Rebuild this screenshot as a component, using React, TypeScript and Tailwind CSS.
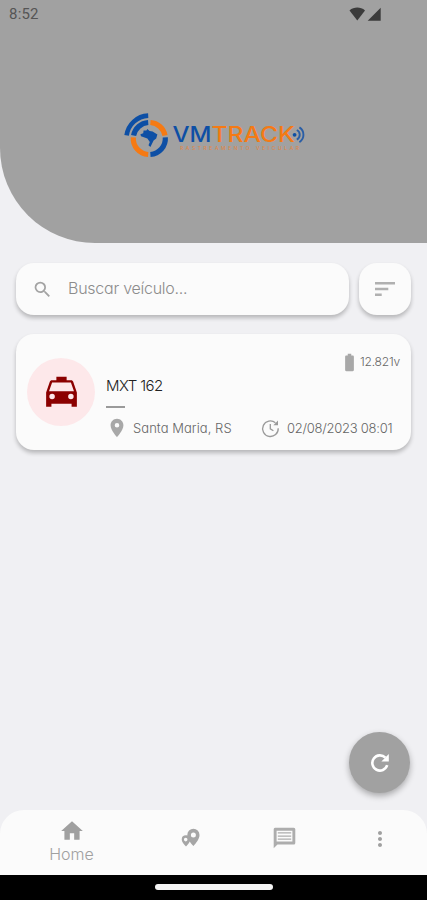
import { MdBatteryFull, MdHome, MdLocationOn, MdMoreVert, MdSearch } from "react-icons/md";

const vehicles = [
  {
    id: 1,
    name: "MXT 162",
    battery: "12.821v",
    city: "Santa Maria, RS",
    date: "02/08/2023 08:01",
  },
];

function StatusBar() {
  return (
    <div className="flex items-center justify-between h-[28px] pl-[9px] pr-[45px]">
      <span className="font-['Roboto',sans-serif] font-normal text-[15px] leading-none tracking-[0.2px] text-[#555]">
        8:52
      </span>
      <svg width="33" height="14" viewBox="0 0 33 14" fill="#3b3b3b">
        <path d="M0.5 3.4C4.9-.3 11.6-.3 16 3.4L8.3 13.4z" />
        <path d="M31.7 0.8V13.8H18.7z" />
      </svg>
    </div>
  );
}

function Logo() {
  return (
    <svg width="186" height="50" viewBox="0 0 186 50">
      {/* GLOBE */}
      <g fill="none" strokeWidth="5.2">
        <path d="M4.6 25.4A22.9 22.9 0 0 1 26.2 5.6" stroke="#0d4fa5" strokeWidth="4.6" />
        <path d="M11.6 25.4A16 16 0 0 1 26.2 12.5" stroke="#0d4fa5" />
        <path d="M28.4 12.5A16 16 0 0 1 43 25.4" stroke="#f57a14" />
        <path d="M43.3 27.4A16 16 0 0 1 28.4 44.5" stroke="#0d4fa5" />
        <path d="M26.2 44.5A16 16 0 0 1 11.3 27.4" stroke="#f57a14" />
      </g>
      <path
        d="M21.6 20.4L24.4 20.6L25.4 19L27.6 21L30.6 21.4L35.4 24.4L34.2 28.6L31.6 30.6L28.4 37L26.5 35.2L27.8 32L25.4 28.4L19 26.2L18.4 24.2L21.2 23.2z"
        fill="#0d4fa5"
      />

      {/* WORDMARK */}
      <g className="font-['Inter',sans-serif]" fontSize="21">
        <text x="50.5" y="32.4" fontWeight="500" fill="#0d4fa5" textLength="39" lengthAdjust="spacingAndGlyphs">VM</text>
        <text x="89.5" y="32.4" fontWeight="500" fill="#f57a14" textLength="83.5" lengthAdjust="spacingAndGlyphs">TRACK</text>
        <text x="58" y="40.2" fontSize="5" fontWeight="500" fill="#f08030" opacity="0.75" textLength="119" lengthAdjust="spacing">
          RASTREAMENTO VEICULAR
        </text>
      </g>

      {/* SIGNAL */}
      <circle cx="172.6" cy="24.8" r="1.9" fill="#0d4fa5" />
      <g fill="none" stroke="#2a5ea6" strokeWidth="1.9">
        <path d="M174.8 20A5.4 5.4 0 0 1 174.8 29.6" />
        <path d="M177.4 17.4A8.8 8.8 0 0 1 177.4 32.2" />
      </g>
    </svg>
  );
}

function TaxiIcon() {
  return (
    <svg width="41" height="41" viewBox="0 0 24 24" fill="#8b0000" fillRule="evenodd">
      <path d="M9 2.800h6v2.100h2.600c.6 0 1.100.4 1.300.9L21 12v8.400h-3.100v-1.800H6.100v1.800H3V12l2.100-6.200c.2-.5.7-.9 1.300-.9H9zM6.500 6.200L4.700 11.200h14.600L17.500 6.200zM6.500 12.800a1.600 1.600 0 1 0 0 3.200 1.600 1.600 0 0 0 0-3.200zM17.500 12.800a1.600 1.600 0 1 0 0 3.200 1.600 1.600 0 0 0 0-3.200z" />
    </svg>
  );
}

function UpdateIcon() {
  return (
    <svg width="19" height="19" viewBox="0 0 19 19" fill="none" stroke="#9a9a9a" strokeWidth="1.3">
      <path d="M17.2 9.2A7.8 7.8 0 1 1 14.4 3.7" />
      <path d="M17 1.6V6.2H12.4z" fill="#9a9a9a" stroke="none" />
      <path d="M9.3 5V9.8L12.4 11.8" />
    </svg>
  );
}

function VehicleCard({ vehicle }: { vehicle: (typeof vehicles)[number] }) {
  return (
    <div className="flex h-[116px] mt-[19px] pl-[11px] rounded-[18px] bg-[#fbfbfb] shadow-[0_3px_4px_rgba(0,0,0,0.24)]">
      <div className="flex items-center justify-center shrink-0 size-[68px] mt-[24px] rounded-full bg-[#fde8ea]">
        <TaxiIcon />
      </div>

      <div className="flex-1 pl-[11px]">
        {/* BATTERY */}
        <div className="flex items-center justify-end h-[20px] mt-[18px] pr-[11px]">
          <MdBatteryFull className="size-[21px] text-[#a8a8a8]" />
          <span className="w-[40px] text-[12px] tracking-[-0.2px] text-[#666] whitespace-nowrap">
            {vehicle.battery}
          </span>
        </div>

        {/* NAME */}
        <p className="h-[28px] text-[15px] leading-[28px] tracking-[-0.6px] text-[#222]">
          {vehicle.name}
        </p>
        <div className="w-[19px] h-[2px] mt-[6px] bg-[#9a9a9a]" />

        {/* PLACE / DATE */}
        <div className="flex items-center h-[20px] mt-[10px] text-[13px] text-[#666] whitespace-nowrap">
          <MdLocationOn className="size-[22px] text-[#a8a8a8]" />
          <span className="w-[133px] pl-[5px] pt-[2px] tracking-[0.05px]">{vehicle.city}</span>
          <UpdateIcon />
          <span className="pl-[7px] pt-[2px] tracking-[-0.25px]">{vehicle.date}</span>
        </div>
      </div>
    </div>
  );
}

function BottomNav() {
  return (
    <div className="grid grid-cols-[143px_95px_94px_95px] h-[65px] rounded-t-[24px] bg-[#fbfbfb] text-[#a0a0a0]">
      <div className="flex flex-col items-center pt-[8px]">
        <MdHome className="size-[26px]" />
        <span className="text-[16px] leading-[20px]">Home</span>
      </div>
      <div className="flex justify-center pt-[18px]">
        <svg width="20" height="20" viewBox="0 0 20 20" fill="#a6a6a6" fillRule="evenodd">
          <path d="M12.4 0.8a6.1 6.1 0 0 1 6.1 6.1c0 3.8-3 7.6-6.1 11-3.1-3.4-6.1-7.2-6.1-11a6.1 6.1 0 0 1 6.1-6.1zm0 3.6a2.5 2.5 0 1 0 0 5 2.5 2.5 0 0 0 0-5z" />
          <path d="M5 7.3a4.3 4.3 0 0 1 4.3 4.2c0 2.5-2.1 4.7-4.3 6.900C2.800 16.200 0.700 14 0.700 11.500A4.300 4.300 0 0 1 5 7.300zm-0.300 2.500a1.800 1.800 0 1 0 0 3.600 1.800 1.800 0 0 0 0-3.600z" />
        </svg>
      </div>
      <div className="flex justify-center pt-[17px] pr-[1px]">
        <svg width="23" height="22" viewBox="0 0 23 22" fill="#adadad" fillRule="evenodd">
          <path d="M2 0.800h18.800a1.500 1.500 0 0 1 1.500 1.500v13.600a1.500 1.500 0 0 1-1.500 1.500H4.500L0.700 21.200V2.300A1.500 1.500 0 0 1 2 0.800zM3.600 3.700v10.800h15.800V3.700z" />
          <path d="M4.800 5.300h13.400v1.300H4.800zM4.800 8.400h13.400v1.300H4.800zM4.800 11.500h13.400v1.300H4.800z" />
        </svg>
      </div>
      <div className="flex justify-center pt-[17px]">
        <MdMoreVert className="size-[24px]" />
      </div>
    </div>
  );
}

export default function App() {
  return (
    <div className="
      relative flex flex-col
      w-[427px] h-[900px] overflow-hidden
      bg-[#f0f0f3]
      font-['Inter',sans-serif] font-light
      [font-feature-settings:'cv11']
    ">

      {/* HEADER */}
      <header className="h-[243px] rounded-bl-[95px] bg-[#a1a1a1]">
        <StatusBar />
        <div className="pl-[122px] pt-[82px]">
          <Logo />
        </div>
      </header>

      <main className="flex-1 px-4 pt-5">
        {/* SEARCH */}
        <div className="flex gap-[10px] h-[52px]">
          <div className="flex items-center w-[333px] pl-[16px] rounded-[18px] bg-[#fbfbfb] shadow-[0_3px_4px_rgba(0,0,0,0.24)]">
            <MdSearch className="size-[21px] text-[#a3a3a3]" />
            <span className="pl-[15px] pb-[3px] text-[16px] tracking-[-0.25px] text-[#8c8c8c]">
              Buscar veículo...
            </span>
          </div>
          <button className="flex items-center justify-center w-[52px] rounded-[18px] bg-[#fbfbfb] shadow-[0_3px_4px_rgba(0,0,0,0.24)]">
            <svg width="20" height="14" viewBox="0 0 20 14" fill="#b0b0b0">
              <path d="M0 0h20v2.600H0zM0 5.700h13.300v2.600H0zM0 11.400h6.700V14H0z" />
            </svg>
          </button>
        </div>

        {vehicles.map((vehicle) => (
          <VehicleCard key={vehicle.id} vehicle={vehicle} />
        ))}
      </main>

      {/* REFRESH */}
      <button className="absolute right-[17px] top-[732px] flex items-center justify-center size-[61px] rounded-full bg-[#a1a1a1] shadow-[0_3px_6px_rgba(0,0,0,0.3)]">
        <svg width="20" height="20" viewBox="0 0 20 20" fill="none">
          <path d="M17.200 12.200A7.600 7.600 0 1 1 15.400 4.700" stroke="#fff" strokeWidth="2.600" />
          <path d="M18.800 1V8.400H11.400z" fill="#fff" />
        </svg>
      </button>

      <BottomNav />

      {/* SYSTEM BAR */}
      <div className="flex justify-center h-[25px] pt-[9px] bg-black">
        <div className="w-[118px] h-[6px] rounded-full bg-[#f4f4f4]" />
      </div>
    </div>
  );
}
